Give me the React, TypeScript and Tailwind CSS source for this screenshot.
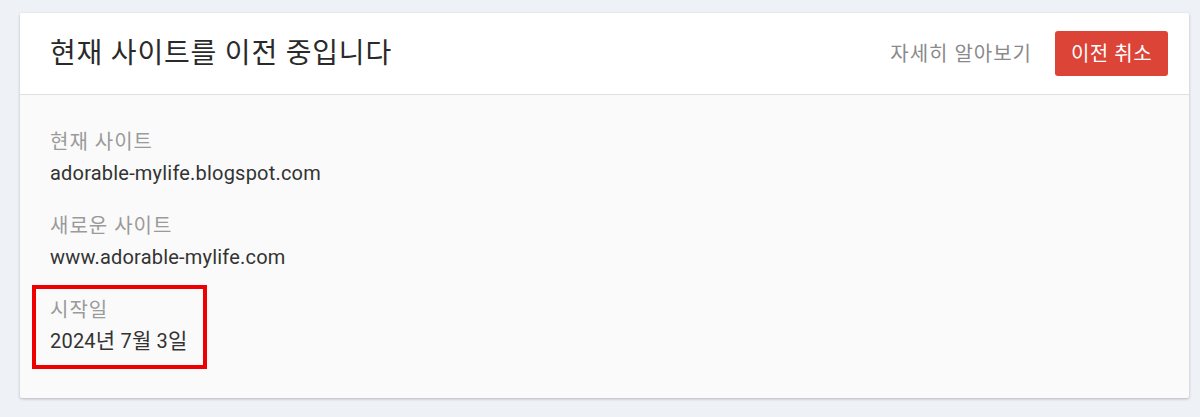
import React from "react";

const font = { fontFamily: "Roboto, 'Noto Sans CJK KR', sans-serif" };

const fields = [
  { label: "현재 사이트", value: <>adorable-mylife.blogspot.com</> },
  { label: "새로운 사이트", value: <>www.adorable-mylife.com</> },
  {
    label: "시작일",
    value: (
      <>
        2024<span className="text-[21px]">년</span> 7<span className="text-[21px]">월</span> 3
        <span className="text-[21px]">일</span>
      </>
    ),
    marked: true,
  },
];

export default function App() {
  return (
    <div
      className="min-h-[417px] w-[1200px] bg-[#eef1f6] pl-[20px] pr-[11px] pt-[13px] pb-[19px]"
      style={font}
    >
      <div className="overflow-hidden rounded-[2px] bg-[#fafafa] shadow-[0_1px_3px_rgba(0,0,0,0.25)]">
        {/* header */}
        <div className="flex h-[82px] items-center justify-between border-b border-[#e0e0e0] bg-white pl-[30px] pr-[21px]">
          <h1 className="text-[28px] leading-none tracking-[0.8px] text-[#2a2a2a]">
            현재 사이트를 이전 중입니다
          </h1>
          <div className="flex items-center gap-[23px]">
            <span className="text-[20px] tracking-[1px] text-[#8a8a8a]">자세히 알아보기</span>
            <button className="h-[45px] w-[113px] rounded-[3px] bg-[#db4437] text-[20px] tracking-[0.5px] text-white">
              이전 취소
            </button>
          </div>
        </div>

        {/* body */}
        <div className="flex flex-col gap-[27px] pl-[30px] pt-[34px] pb-[44px]">
          {fields.map((f) => (
            <div key={f.label} className="relative">
              {f.marked && (
                <div className="absolute left-[-18px] top-[-12px] h-[84px] w-[175px] border-[4px] border-[#ee0000]" />
              )}
              <div className="text-[20px] leading-[26px] tracking-[1px] text-[#9a9a9a]">{f.label}</div>
              <div className="mt-[5px] text-[20px] leading-[26px] tracking-[0.2px] text-[#333]">
                {f.value}
              </div>
            </div>
          ))}
        </div>
      </div>
    </div>
  );
}
